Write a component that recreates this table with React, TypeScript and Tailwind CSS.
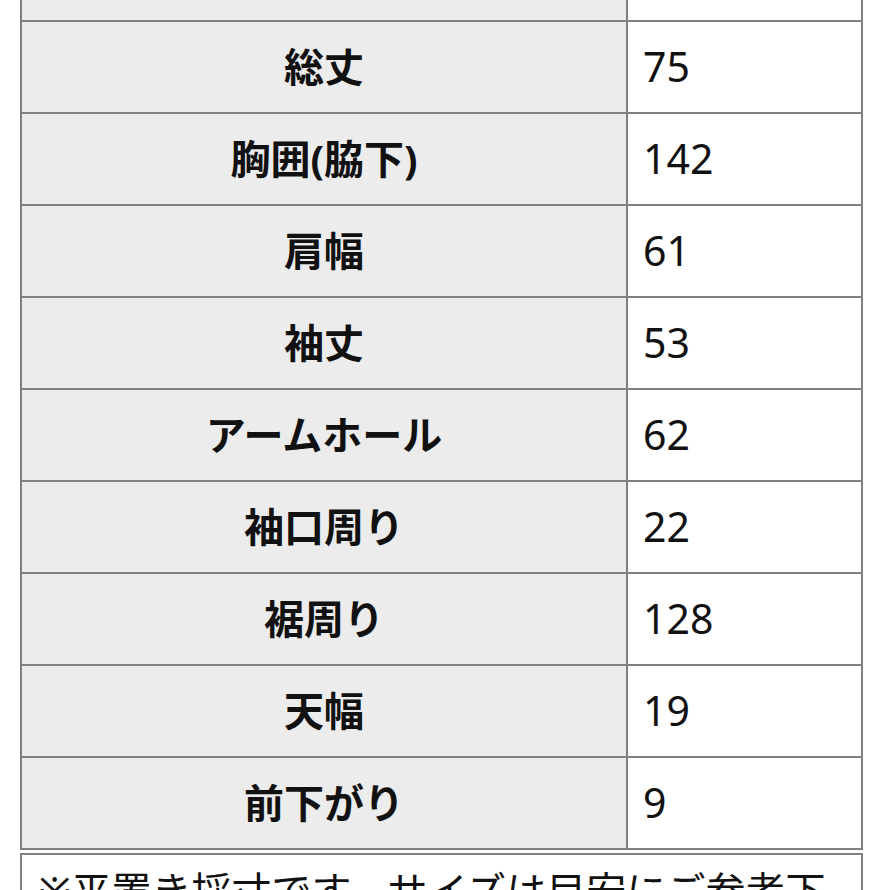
const rows: [string, string][] = [
  ["総丈", "75"],
  ["胸囲(脇下)", "142"],
  ["肩幅", "61"],
  ["袖丈", "53"],
  ["アームホール", "62"],
  ["袖口周り", "22"],
  ["裾周り", "128"],
  ["天幅", "19"],
  ["前下がり", "9"],
];

const font = { fontFamily: '"Noto Sans", "Noto Sans CJK JP", sans-serif' };

export default function App() {
  return (
    <div className="min-h-[890px] w-[890px] overflow-hidden bg-white text-[#111]" style={font}>
      <div className="ml-[20px] w-[843px] border-x-2 border-b-2 border-[#808080]">
        {/* row cut off at the top */}
        <div className="flex h-[20px]">
          <div className="w-[606px] border-r-2 border-[#808080] bg-[#ececec]" />
          <div className="flex-1" />
        </div>
        {rows.map(([label, value]) => (
          <div key={label} className="flex h-[92px] border-t-2 border-[#808080]">
            <div className="flex w-[606px] items-center justify-center border-r-2 border-[#808080] bg-[#ececec] text-[40px] font-bold">
              {label}
            </div>
            <div className="flex flex-1 items-center pl-[15px] text-[41px]">{value}</div>
          </div>
        ))}
      </div>
      <div className="ml-[20px] mt-[3px] w-[843px] border-2 border-[#808080] pl-[16px] pr-[2px] pt-[6px] text-[40px] leading-[1.5]">
        ※平置き採寸です。サイズは目安にご参考下さい。
      </div>
    </div>
  );
}
